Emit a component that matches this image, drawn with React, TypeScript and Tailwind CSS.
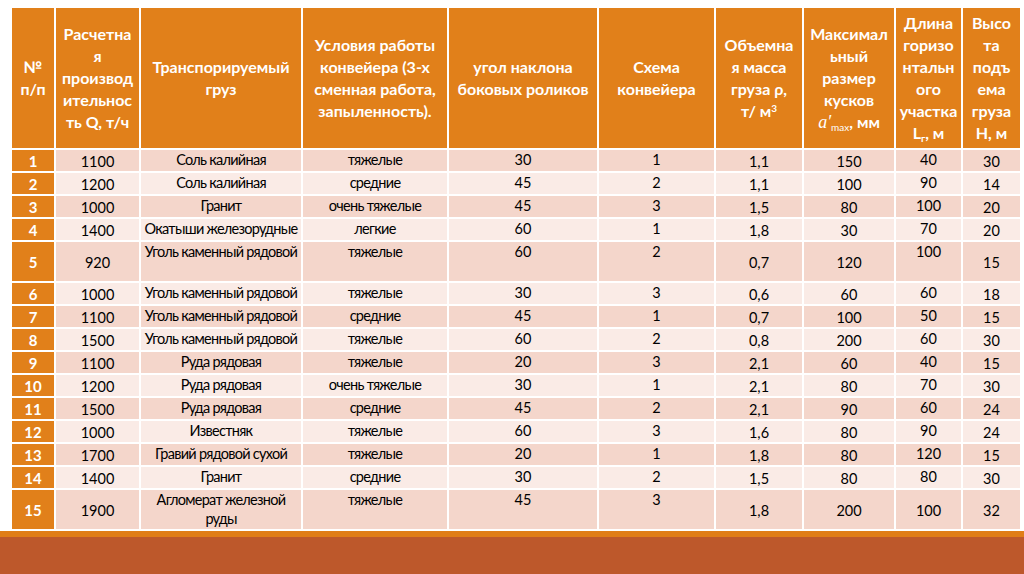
import clsx from 'clsx';

const ROWS: string[][] = [
	['1', '1100', 'Соль калийная', 'тяжелые', '30', '1', '1,1', '150', '40', '30'],
	['2', '1200', 'Соль калийная', 'средние', '45', '2', '1,1', '100', '90', '14'],
	['3', '1000', 'Гранит', 'очень тяжелые', '45', '3', '1,5', '80', '100', '20'],
	['4', '1400', 'Окатыши железорудные', 'легкие', '60', '1', '1,8', '30', '70', '20'],
	['5', '920', 'Уголь каменный рядовой', 'тяжелые', '60', '2', '0,7', '120', '100', '15'],
	['6', '1000', 'Уголь каменный рядовой', 'тяжелые', '30', '3', '0,6', '60', '60', '18'],
	['7', '1100', 'Уголь каменный рядовой', 'средние', '45', '1', '0,7', '100', '50', '15'],
	['8', '1500', 'Уголь каменный рядовой', 'тяжелые', '60', '2', '0,8', '200', '60', '30'],
	['9', '1100', 'Руда рядовая', 'тяжелые', '20', '3', '2,1', '60', '40', '15'],
	['10', '1200', 'Руда рядовая', 'очень тяжелые', '30', '1', '2,1', '80', '70', '30'],
	['11', '1500', 'Руда рядовая', 'средние', '45', '2', '2,1', '90', '60', '24'],
	['12', '1000', 'Известняк', 'тяжелые', '60', '3', '1,6', '80', '90', '24'],
	['13', '1700', 'Гравий рядовой сухой', 'тяжелые', '20', '1', '1,8', '80', '120', '15'],
	['14', '1400', 'Гранит', 'средние', '30', '2', '1,5', '80', '80', '30'],
	['15', '1900', 'Агломерат железной\nруды', 'тяжелые', '45', '3', '1,8', '200', '100', '32'],
];

// columns whose values sit at the top of the cell in the source slide
const TOP_COLS = [2, 3, 4, 5, 8];

function Lines({ text }: { text: string }) {
	const parts = text.split('\n');
	return (
		<>
			{parts.map((p, i) => (
				<span key={i}>
					{i > 0 && <br />}
					{p}
				</span>
			))}
		</>
	);
}

function HeaderRow() {
	const th = 'bg-[#E1801A] text-white font-bold text-[16px] leading-[22px] text-center align-middle px-0';
	return (
		<tr className="h-[140px]">
			<th className={th}>
				<Lines text={'№\nп/п'} />
			</th>
			<th className={th}>
				<Lines text={'Расчетна\nя\nпроизвод\nительнос\nть Q, т/ч'} />
			</th>
			<th className={th}>
				<Lines text={'Транспорируемый\nгруз'} />
			</th>
			<th className={th}>
				<Lines text={'Условия работы\nконвейера (3-х\nсменная работа,\nзапыленность).'} />
			</th>
			<th className={th}>
				<Lines text={'угол наклона\nбоковых роликов'} />
			</th>
			<th className={th}>
				<Lines text={'Схема\nконвейера'} />
			</th>
			<th className={th}>
				Объемна
				<br />я масса
				<br />
				груза ρ,
				<br />
				т/ м<sup className="text-[10px]">3</sup>
			</th>
			<th className={th}>
				Максимал
				<br />
				ьный
				<br />
				размер
				<br />
				кусков
				<br />
				<span className="font-['Liberation_Serif'] italic font-normal text-[18px]">a′</span>
				<sub className="text-[10px] font-normal">max</sub>, мм
			</th>
			<th className={th}>
				Длина
				<br />
				горизо
				<br />
				нтальн
				<br />
				ого
				<br />
				участка
				<br />
				L<sub className="text-[10px]">г</sub>, м
			</th>
			<th className={th}>
				<Lines text={'Высо\nта\nподъ\nема\nгруза\nН, м'} />
			</th>
		</tr>
	);
}

export default function App() {
	return (
		<div className="w-[1024px] h-[574px] bg-white flex flex-col font-['Lato',sans-serif] overflow-hidden">
			<div className="pt-[6px] px-[10px]">
				<table className="w-[1004px] table-fixed border-separate border-spacing-x-[2px] border-spacing-y-[2.2px] bg-white">
					<colgroup>
						<col className="w-[42px]" />
						<col className="w-[83px]" />
						<col className="w-[160px]" />
						<col className="w-[144px]" />
						<col className="w-[148px]" />
						<col className="w-[115px]" />
						<col className="w-[86px]" />
						<col className="w-[90px]" />
						<col className="w-[65px]" />
						<col className="w-[57px]" />
					</colgroup>
					<thead>
						<HeaderRow />
					</thead>
					<tbody>
						{ROWS.map((row, r) => {
							const n = r + 1;
							const tall = n === 5 || n === 15;
							const bg = n % 2 === 1 ? 'bg-[#F4D6CB]' : 'bg-[#FAEBE6]';
							return (
								<tr key={n} className={tall ? 'h-[39px]' : 'h-[21px]'}>
									{row.map((v, c) => {
										if (c === 0) {
											return (
												<td
													key={c}
													className="bg-[#E1801A] text-white font-bold text-[15px] leading-[18px] text-center align-middle px-0"
												>
													{v}
												</td>
											);
										}
										const top = TOP_COLS.includes(c) && !(n === 15 && c === 8);
										return (
											<td
												key={c}
												className={clsx(
													bg,
													'text-center px-0 text-[14.5px] leading-[19px] text-black whitespace-nowrap',
													top ? 'align-top pt-0' : 'align-middle pt-[2px]',
													(c === 2 || c === 3) && 'tracking-[-0.05em]',
												)}
											>
												<Lines text={v} />
											</td>
										);
									})}
								</tr>
							);
						})}
					</tbody>
				</table>
			</div>
			<div className="mt-auto">
				<div className="h-[6px] bg-[#E07D17]" />
				<div className="h-[37px] bg-[#BD582B]" />
			</div>
		</div>
	);
}
